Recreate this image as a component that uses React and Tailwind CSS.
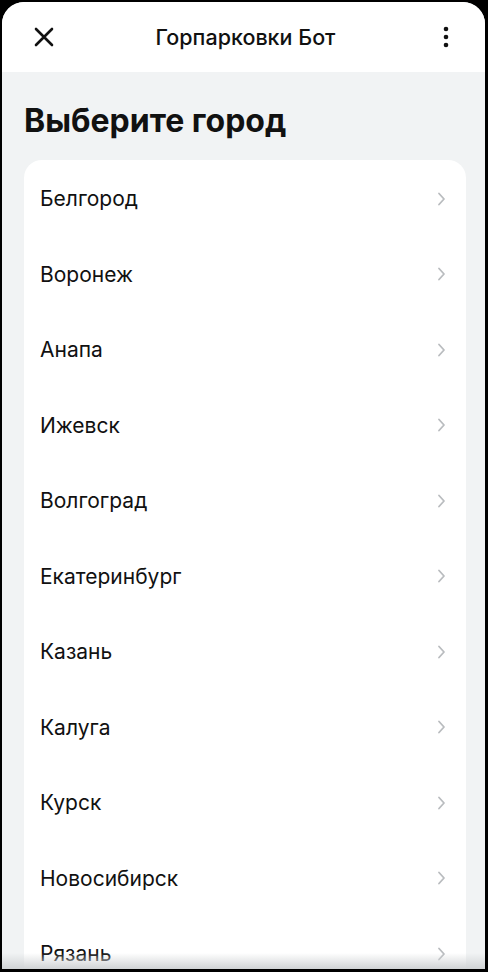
import React from 'react'

const cities = [
  'Белгород',
  'Воронеж',
  'Анапа',
  'Ижевск',
  'Волгоград',
  'Екатеринбург',
  'Казань',
  'Калуга',
  'Курск',
  'Новосибирск',
  'Рязань',
]

function CloseIcon() {
  return (
    <svg width="20" height="20" viewBox="0 0 20 20" fill="none" stroke="#111" strokeWidth="2.6" strokeLinecap="round">
      <path d="M2 2l16 16M18 2L2 18" />
    </svg>
  )
}

function MoreIcon() {
  return (
    <svg width="6" height="22" viewBox="0 0 6 22" fill="#111">
      <circle cx="3" cy="3" r="2.3" />
      <circle cx="3" cy="11" r="2.3" />
      <circle cx="3" cy="19" r="2.3" />
    </svg>
  )
}

function Chevron() {
  return (
    <svg width="9" height="14" viewBox="0 0 9 14" fill="none" stroke="#b9bcbf" strokeWidth="1.8" strokeLinecap="round" strokeLinejoin="round">
      <path d="M2 1.5l5 5.5-5 5.5" />
    </svg>
  )
}

export default function App() {
  return (
    <div className="w-[488px] h-[972px] bg-[#9a9a9a] overflow-hidden" style={{ fontFamily: 'Inter, "Liberation Sans", sans-serif' }}>
      <div className="h-full bg-black pl-[2px] pr-[3px] pt-[2px] pb-[3px]">
        <div className="relative h-full rounded-t-[22px] bg-[#f1f3f4] overflow-hidden flex flex-col">
          {/* header */}
          <div className="h-[70px] shrink-0 bg-white flex items-center justify-between pl-[32px] pr-[36px]">
            <CloseIcon />
            <div className="text-[21.5px] font-medium text-[#111] -translate-x-[3px]">Горпарковки Бот</div>
            <MoreIcon />
          </div>

          <h1 className="pl-[22px] pt-[29px] pb-[19px] text-[32px] leading-[40px] font-bold text-[#111]">
            Выберите город
          </h1>

          <div className="ml-[22px] mr-[19px] bg-white rounded-t-[18px] flex flex-col pt-[1px]">
            {cities.map((c) => (
              <div key={c} className="h-[75.5px] shrink-0 flex items-center justify-between pl-[16px] pr-[20px]">
                <span className="text-[21px] text-[#111]">{c}</span>
                <Chevron />
              </div>
            ))}
          </div>

          <div className="absolute left-0 right-0 bottom-0 h-[16px] bg-gradient-to-b from-transparent to-[#d0d3d5]" />
        </div>
      </div>
    </div>
  )
}
